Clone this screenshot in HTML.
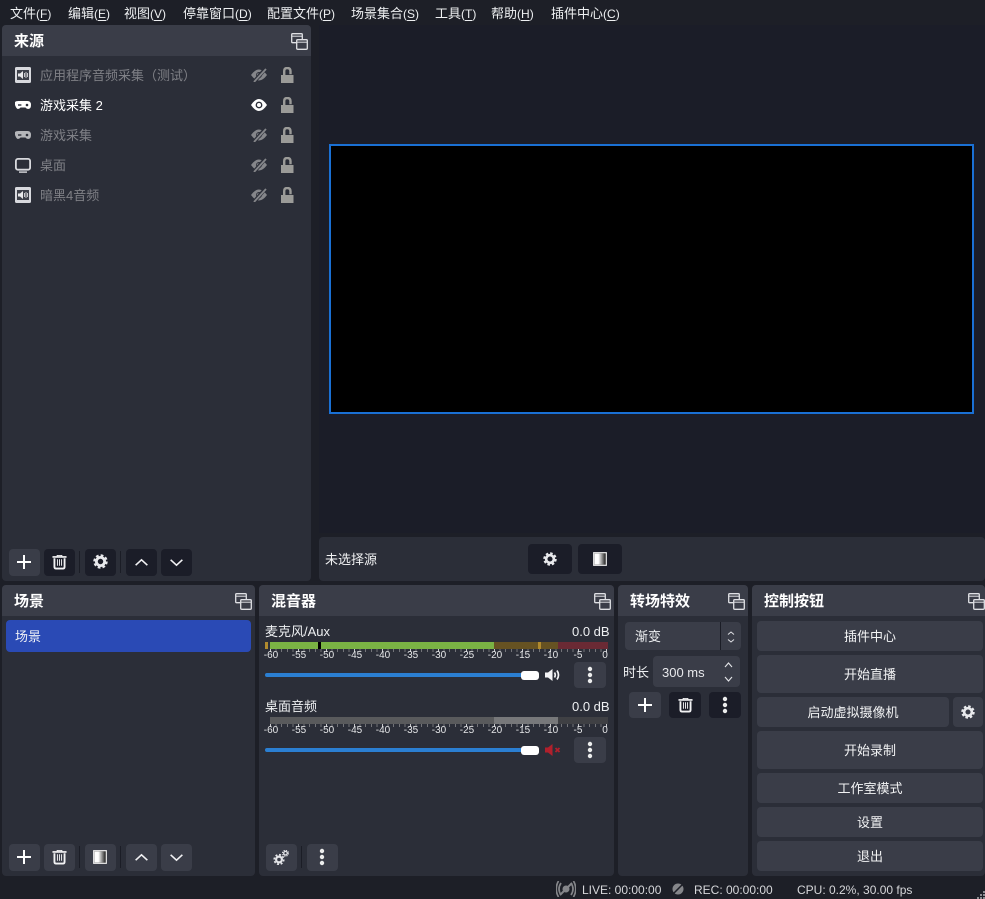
<!DOCTYPE html>
<html lang="zh-CN"><head><meta charset="utf-8"><title>OBS</title>
<style>
html,body{margin:0;padding:0;width:985px;height:899px;overflow:hidden}
body{position:relative;background:#1d1f27;color:#fff;font:13px/22px "Liberation Sans","WenQuanYi Zen Hei","Noto Sans CJK SC",sans-serif}
div,span,svg{position:absolute;box-sizing:border-box}
.t{white-space:nowrap}
u{text-decoration:underline;text-underline-offset:2px}
small{font-size:12px}
.m{top:5px;color:#eef0f2;letter-spacing:0;line-height:18px}
.p{background:#2b2e38;border-radius:4px}
.h{left:0;right:0;top:0;height:31px;background:#3a3d48;border-radius:4px 4px 0 0}
.h b{position:absolute;left:12px;top:6px;font-family:"Liberation Sans","Noto Sans CJK SC",sans-serif;font-size:15px;line-height:22px;font-weight:700;white-space:nowrap}
.b{background:#3a3d48;border-radius:4px;text-align:center}
.d{background:#1b1d28;border-radius:4px}
.l{background:#3a3d48;border-radius:4px}
.c{text-align:center;line-height:22px;color:#f2f3f4}
.dim{color:#7f8086}
.sep{width:1px;background:#1b1d26}
.n{font-size:10px;line-height:12px;color:#e4e5e7;width:24px;text-align:center;white-space:nowrap}
.tick{height:3px;background:repeating-linear-gradient(90deg,#737479 0 1px,transparent 1px 5.6px)}
.tick2{height:3px;background:repeating-linear-gradient(90deg,#c8c9cc 0 1px,transparent 1px 28px)}
</style></head><body>
<svg width="0" height="0" style="left:0;top:0">
<defs>
<linearGradient id="fg"><stop offset="0" stop-color="#fff"/><stop offset=".35" stop-color="#fff"/><stop offset="1" stop-color="#222"/></linearGradient>
<symbol id="dock" viewBox="0 0 17 17"><rect x=".7" y=".7" width="10.6" height="9" rx="1" fill="none" stroke="#dfe0e4" stroke-width="1.3"/><path d="M1 3.2h10" stroke="#dfe0e4"/><rect x="5.7" y="6.7" width="10.6" height="9.6" rx="1" fill="#3a3d48" stroke="#dfe0e4" stroke-width="1.3"/><path d="M6 9.2h10" stroke="#dfe0e4"/></symbol>
<symbol id="plus" viewBox="0 0 16 16"><path d="M8 1v14M1 8h14" stroke="#fff" stroke-width="2"/></symbol>
<symbol id="trash" viewBox="0 0 16 16"><path d="M.5 2.600h15" stroke="#f2f2f4" stroke-width="1.800"/><path d="M5.500 2.500V1h5v1.500" stroke="#f2f2f4" fill="none"/><path d="M2.600 4v9.200q0 1.800 1.800 1.800h7.200q1.800 0 1.800-1.800V4" fill="none" stroke="#f2f2f4" stroke-width="2"/><path d="M5.800 5v7M8 5v7M10.200 5v7" stroke="#f2f2f4"/></symbol>
<symbol id="gear" viewBox="0 0 16 16"><circle cx="8" cy="8" r="4.4" fill="none" stroke="#e8e9ec" stroke-width="3"/><circle cx="8" cy="8" r="6.5" fill="none" stroke="#e8e9ec" stroke-width="2.4" stroke-dasharray="2.9 2.2"/></symbol>
<symbol id="up" viewBox="0 0 16 10"><path d="M1.5 8L8 2l6.500 6" fill="none" stroke="#f2f2f4" stroke-width="1.800"/></symbol>
<symbol id="down" viewBox="0 0 16 10"><path d="M1.500 2L8 8l6.500-6" fill="none" stroke="#f2f2f4" stroke-width="1.800"/></symbol>
<symbol id="filter" viewBox="0 0 14 14"><rect x=".7" y=".7" width="12.600" height="12.600" fill="#222" stroke="#eee" stroke-width="1.200"/><rect x="1.500" y="1.500" width="11" height="11" fill="url(#fg)"/></symbol>
<symbol id="dots" viewBox="0 0 6 18"><circle cx="3" cy="3" r="2.200" fill="#eceded"/><circle cx="3" cy="9" r="2.200" fill="#eceded"/><circle cx="3" cy="15" r="2.200" fill="#eceded"/></symbol>
<symbol id="eye" viewBox="0 0 16 12"><path d="M0 6Q4 0 8 0t8 6q-4 6-8 6T0 6z" fill="#fff"/><circle cx="8" cy="6" r="3.400" fill="#2b2e38"/><circle cx="8" cy="6" r="2" fill="#fff"/></symbol>
<symbol id="eyeoff" viewBox="0 0 16 14"><path d="M0 7Q4 1.500 8 1.500T16 7q-4 5.500-8 5.500T0 7z" fill="#85868a"/><circle cx="8" cy="7" r="3" fill="#2b2e38"/><circle cx="7.500" cy="7" r="1.700" fill="#85868a"/><path d="M2.500 14.500L15 0" stroke="#2b2e38" stroke-width="3.800"/><path d="M3 14L15 1" stroke="#85868a" stroke-width="1.800"/></symbol>
<symbol id="lock" viewBox="0 0 13 16"><rect x="0" y="8" width="12.500" height="8" fill="#9b9b98"/><path d="M3.200 8.500V4.200Q3.200 1 6.300 1t3.200 3.200v3" fill="none" stroke="#9b9b98" stroke-width="2.400"/></symbol>
<symbol id="pad" viewBox="0 0 16 8"><path d="M3.500 0h9Q16 0 16 4t-3 4q-1.500 0-2.500-1.500h-5Q4.500 8 3 8T0 4t3.500-4z" fill="currentColor"/><rect x="3" y="3.300" width="3.400" height="1.400" fill="#2b2e38"/><circle cx="12" cy="4" r="1.300" fill="#2b2e38"/></symbol>
<symbol id="mon" viewBox="0 0 16 15"><rect x=".9" y=".9" width="14.200" height="10.800" rx="2" fill="none" stroke="#d8d9dd" stroke-width="1.800"/><rect x="4" y="13.400" width="8" height="1.400" fill="#d8d9dd"/></symbol>
<symbol id="aud" viewBox="0 0 16 16"><rect width="16" height="16" rx="1.500" fill="#d8d9de"/><rect x="2" y="3" width="12" height="10" fill="#3d4049"/><path d="M3 6.500h2L8 4v8L5 9.500H3z" fill="#e8e8ea"/><path d="M9.500 6v4M11 5v6M12.500 6v4" stroke="#c8c8cc"/></symbol>
<symbol id="spk" viewBox="0 0 16 14"><path d="M0 4.500h3L7.500 1v12L3 9.500H0z" fill="#f4f4f6"/><path d="M9.500 4.500q1.500 2.500 0 5M12 2.500q3 4.500 0 9" fill="none" stroke="#f4f4f6" stroke-width="1.700"/></symbol>
<symbol id="mute" viewBox="0 0 16 14"><path d="M0 4.500h3L7.500 1v12L3 9.500H0z" fill="#b0202c"/><path d="M10.500 5l4 4M14.500 5l-4 4" stroke="#b0202c" stroke-width="1.800"/></symbol>
<symbol id="gears" viewBox="0 0 16 15"><circle cx="6" cy="9.500" r="2.900" fill="none" stroke="#e4e5e8" stroke-width="2.200"/><circle cx="6" cy="9.500" r="4.800" fill="none" stroke="#e4e5e8" stroke-width="1.600" stroke-dasharray="2 1.750"/><circle cx="12.500" cy="3.200" r="1.800" fill="none" stroke="#e4e5e8" stroke-width="1.300"/><circle cx="12.500" cy="3.200" r="3" fill="none" stroke="#e4e5e8" stroke-width="1" stroke-dasharray="1.300 1.050"/></symbol>
<symbol id="live" viewBox="0 0 20 16"><path d="M5 2Q1 8 5 14M2.500 0Q-2 8 2.500 16M15 2q4 6 0 12M17.500 0q4.500 8 0 16" fill="none" stroke="#85868a" stroke-width="1.700"/><circle cx="10" cy="8" r="3.500" fill="#85868a"/><path d="M4 14L16 2" stroke="#85868a" stroke-width="2"/></symbol>
<symbol id="rec" viewBox="0 0 12 12"><circle cx="6" cy="6" r="5.500" fill="#85868a"/><path d="M0 12L12 0" stroke="#1d1f27" stroke-width="1.500"/></symbol>
</defs></svg>

<!-- menu -->
<span class="t m" style="left:10px">文件<small>(<u>F</u>)</small></span>
<span class="t m" style="left:68px">编辑<small>(<u>E</u>)</small></span>
<span class="t m" style="left:124px">视图<small>(<u>V</u>)</small></span>
<span class="t m" style="left:183px">停靠窗口<small>(<u>D</u>)</small></span>
<span class="t m" style="left:267px">配置文件<small>(<u>P</u>)</small></span>
<span class="t m" style="left:351px">场景集合<small>(<u>S</u>)</small></span>
<span class="t m" style="left:435px">工具<small>(<u>T</u>)</small></span>
<span class="t m" style="left:491px">帮助<small>(<u>H</u>)</small></span>
<span class="t m" style="left:551px">插件中心<small>(<u>C</u>)</small></span>

<!-- preview -->
<div style="left:319px;top:25px;width:666px;height:508px;background:#1b1d28"></div>
<div style="left:329px;top:144px;width:645px;height:270px;background:#000;border:2px solid #1a70d4"></div>

<!-- sources -->
<div class="p" style="left:2px;top:25px;width:309px;height:556px">
<div class="h"><b>来源</b></div>
<svg style="left:289px;top:8px" width="17" height="17"><use href="#dock"/></svg>
</div>
<svg style="left:15px;top:67px" width="16" height="16"><use href="#aud"/></svg>
<span class="t dim" style="left:40px;top:65px">应用程序音频采集（测试）</span>
<svg style="left:251px;top:68px" width="16" height="14"><use href="#eyeoff"/></svg>
<svg style="left:281px;top:67px" width="13" height="16"><use href="#lock"/></svg>
<svg style="left:15px;top:101px;color:#fff" width="16" height="8"><use href="#pad"/></svg>
<span class="t" style="left:40px;top:95px">游戏采集 2</span>
<svg style="left:251px;top:99px" width="16" height="12"><use href="#eye"/></svg>
<svg style="left:281px;top:97px" width="13" height="16"><use href="#lock"/></svg>
<svg style="left:15px;top:131px;color:#b5b6ba" width="16" height="8"><use href="#pad"/></svg>
<span class="t dim" style="left:40px;top:125px">游戏采集</span>
<svg style="left:251px;top:128px" width="16" height="14"><use href="#eyeoff"/></svg>
<svg style="left:281px;top:127px" width="13" height="16"><use href="#lock"/></svg>
<svg style="left:15px;top:158px" width="16" height="15"><use href="#mon"/></svg>
<span class="t dim" style="left:40px;top:155px">桌面</span>
<svg style="left:251px;top:158px" width="16" height="14"><use href="#eyeoff"/></svg>
<svg style="left:281px;top:157px" width="13" height="16"><use href="#lock"/></svg>
<svg style="left:15px;top:187px" width="16" height="16"><use href="#aud"/></svg>
<span class="t dim" style="left:40px;top:185px">暗黑4音频</span>
<svg style="left:251px;top:188px" width="16" height="14"><use href="#eyeoff"/></svg>
<svg style="left:281px;top:187px" width="13" height="16"><use href="#lock"/></svg>
<!-- sources toolbar -->
<div class="l" style="left:9px;top:549px;width:31px;height:27px"></div>
<svg style="left:16px;top:554px" width="16" height="16"><use href="#plus"/></svg>
<div class="d" style="left:44px;top:549px;width:31px;height:27px"></div>
<svg style="left:52px;top:554px" width="15" height="16"><use href="#trash"/></svg>
<div class="sep" style="left:79px;top:551px;height:22px"></div>
<div class="d" style="left:85px;top:549px;width:31px;height:27px"></div>
<svg style="left:93px;top:554px" width="15" height="15"><use href="#gear"/></svg>
<div class="sep" style="left:120px;top:551px;height:22px"></div>
<div class="d" style="left:126px;top:549px;width:31px;height:27px"></div>
<svg style="left:134px;top:558px" width="15" height="9"><use href="#up"/></svg>
<div class="d" style="left:161px;top:549px;width:31px;height:27px"></div>
<svg style="left:169px;top:558px" width="15" height="9"><use href="#down"/></svg>

<!-- context bar -->
<div class="p" style="left:319px;top:537px;width:666px;height:44px"></div>
<span class="t" style="left:325px;top:549px;color:#f2f3f4">未选择源</span>
<div class="d" style="left:528px;top:544px;width:44px;height:30px"></div>
<svg style="left:543px;top:552px" width="14" height="14"><use href="#gear"/></svg>
<div class="d" style="left:578px;top:544px;width:44px;height:30px"></div>
<svg style="left:593px;top:552px" width="14" height="14"><use href="#filter"/></svg>

<!-- scenes -->
<div class="p" style="left:2px;top:585px;width:253px;height:291px">
<div class="h"><b>场景</b></div>
<svg style="left:233px;top:8px" width="17" height="17"><use href="#dock"/></svg>
</div>
<div style="left:6px;top:620px;width:245px;height:32px;background:#2a4ab5;border-radius:4px"></div>
<span class="t" style="left:15px;top:626px;color:#eef0f6">场景</span>
<div class="l" style="left:9px;top:844px;width:31px;height:27px"></div>
<svg style="left:16px;top:849px" width="16" height="16"><use href="#plus"/></svg>
<div class="l" style="left:44px;top:844px;width:31px;height:27px"></div>
<svg style="left:52px;top:849px" width="15" height="16"><use href="#trash"/></svg>
<div class="sep" style="left:79px;top:846px;height:22px"></div>
<div class="l" style="left:85px;top:844px;width:31px;height:27px"></div>
<svg style="left:93px;top:850px" width="14" height="14"><use href="#filter"/></svg>
<div class="sep" style="left:120px;top:846px;height:22px"></div>
<div class="l" style="left:126px;top:844px;width:31px;height:27px"></div>
<svg style="left:134px;top:853px" width="15" height="9"><use href="#up"/></svg>
<div class="l" style="left:161px;top:844px;width:31px;height:27px"></div>
<svg style="left:169px;top:853px" width="15" height="9"><use href="#down"/></svg>

<!-- mixer -->
<div class="p" style="left:259px;top:585px;width:355px;height:291px">
<div class="h"><b>混音器</b></div>
<svg style="left:335px;top:8px" width="17" height="17"><use href="#dock"/></svg>
</div>
<span class="t" style="left:265px;top:621px;color:#eef0f2">麦克风/Aux</span>
<span class="t" style="left:572px;top:621px;color:#eef0f2">0.0 dB</span>
<div style="left:265px;top:642px;width:3px;height:7px;background:#b08a2e"></div>
<div style="left:270px;top:642px;width:224px;height:7px;background:#7ab344"></div>
<div style="left:494px;top:642px;width:64px;height:7px;background:#665222"></div>
<div style="left:558px;top:642px;width:50px;height:7px;background:#6a2a34"></div>
<div style="left:318px;top:642px;width:3px;height:7px;background:#000"></div>
<div style="left:538px;top:642px;width:3px;height:7px;background:#b08a2e"></div>
<div class="tick" style="left:270px;top:649px;width:338px"></div>
<div class="tick2" style="left:270px;top:649px;width:338px"></div>
<span class="n" style="left:259px;top:650px">-60</span><span class="n" style="left:287px;top:650px">-55</span><span class="n" style="left:315px;top:650px">-50</span><span class="n" style="left:343px;top:650px">-45</span><span class="n" style="left:371px;top:650px">-40</span><span class="n" style="left:399px;top:650px">-35</span><span class="n" style="left:427px;top:650px">-30</span><span class="n" style="left:455px;top:650px">-25</span><span class="n" style="left:483px;top:650px">-20</span><span class="n" style="left:511px;top:650px">-15</span><span class="n" style="left:539px;top:650px">-10</span><span class="n" style="left:566px;top:650px">-5</span><span class="n" style="left:593px;top:650px">0</span>
<div style="left:265px;top:673px;width:258px;height:4px;background:#2b7fd2;border-radius:2px"></div>
<div style="left:521px;top:671px;width:18px;height:9px;background:#fff;border-radius:3px"></div>
<svg style="left:545px;top:668px" width="16" height="14"><use href="#spk"/></svg>
<div class="l" style="left:574px;top:662px;width:32px;height:26px"></div>
<svg style="left:587px;top:666px" width="6" height="18"><use href="#dots"/></svg>

<span class="t" style="left:265px;top:696px;color:#eef0f2">桌面音频</span>
<span class="t" style="left:572px;top:696px;color:#eef0f2">0.0 dB</span>
<div style="left:270px;top:717px;width:224px;height:7px;background:#595a5c"></div>
<div style="left:494px;top:717px;width:64px;height:7px;background:#77787a"></div>
<div style="left:558px;top:717px;width:50px;height:7px;background:#3f4044"></div>
<div class="tick" style="left:270px;top:724px;width:338px"></div>
<div class="tick2" style="left:270px;top:724px;width:338px"></div>
<span class="n" style="left:259px;top:725px">-60</span><span class="n" style="left:287px;top:725px">-55</span><span class="n" style="left:315px;top:725px">-50</span><span class="n" style="left:343px;top:725px">-45</span><span class="n" style="left:371px;top:725px">-40</span><span class="n" style="left:399px;top:725px">-35</span><span class="n" style="left:427px;top:725px">-30</span><span class="n" style="left:455px;top:725px">-25</span><span class="n" style="left:483px;top:725px">-20</span><span class="n" style="left:511px;top:725px">-15</span><span class="n" style="left:539px;top:725px">-10</span><span class="n" style="left:566px;top:725px">-5</span><span class="n" style="left:593px;top:725px">0</span>
<div style="left:265px;top:748px;width:258px;height:4px;background:#2b7fd2;border-radius:2px"></div>
<div style="left:521px;top:746px;width:18px;height:9px;background:#fff;border-radius:3px"></div>
<svg style="left:545px;top:743px" width="16" height="14"><use href="#mute"/></svg>
<div class="l" style="left:574px;top:737px;width:32px;height:26px"></div>
<svg style="left:587px;top:741px" width="6" height="18"><use href="#dots"/></svg>

<div class="l" style="left:266px;top:844px;width:31px;height:27px"></div>
<svg style="left:273px;top:850px" width="16" height="15"><use href="#gears"/></svg>
<div class="sep" style="left:301px;top:846px;height:22px"></div>
<div class="l" style="left:307px;top:844px;width:31px;height:27px"></div>
<svg style="left:319px;top:848px" width="6" height="18"><use href="#dots"/></svg>

<!-- transitions -->
<div class="p" style="left:618px;top:585px;width:130px;height:291px">
<div class="h"><b>转场特效</b></div>
<svg style="left:110px;top:8px" width="17" height="17"><use href="#dock"/></svg>
</div>
<div class="l" style="left:625px;top:622px;width:116px;height:28px"></div>
<div style="left:720px;top:622px;width:1px;height:28px;background:#1b1d26"></div>
<span class="t" style="left:635px;top:626px;color:#eef0f2">渐变</span>
<svg style="left:727px;top:631px" width="8" height="4"><path d="M1 3.500L4 1l3 2.500" fill="none" stroke="#dfe0e4"/></svg>
<svg style="left:727px;top:639px" width="8" height="4"><path d="M1 .5L4 3l3-2.500" fill="none" stroke="#dfe0e4"/></svg>
<span class="t" style="left:623px;top:662px;color:#eef0f2">时长</span>
<div class="l" style="left:653px;top:656px;width:87px;height:31px"></div>
<span class="t" style="left:662px;top:662px;color:#e8e9ec">300 ms</span>
<svg style="left:724px;top:662px" width="9" height="6"><path d="M1 5l3.500-4L8 5" fill="none" stroke="#e4e5e8" stroke-width="1.100"/></svg>
<svg style="left:724px;top:676px" width="9" height="6"><path d="M1 1l3.500 4L8 1" fill="none" stroke="#e4e5e8" stroke-width="1.100"/></svg>
<div class="l" style="left:629px;top:692px;width:32px;height:26px"></div>
<svg style="left:637px;top:697px" width="16" height="16"><use href="#plus"/></svg>
<div class="d" style="left:669px;top:692px;width:32px;height:26px"></div>
<svg style="left:678px;top:697px" width="15" height="16"><use href="#trash"/></svg>
<div class="d" style="left:709px;top:692px;width:32px;height:26px"></div>
<svg style="left:722px;top:696px" width="6" height="18"><use href="#dots"/></svg>

<!-- controls -->
<div class="p" style="left:752px;top:585px;width:233px;height:291px">
<div class="h"><b>控制按钮</b></div>
<svg style="left:216px;top:8px" width="17" height="17"><use href="#dock"/></svg>
</div>
<div class="b c" style="left:757px;top:621px;width:226px;height:30px;padding-top:5px">插件中心</div>
<div class="b c" style="left:757px;top:655px;width:226px;height:38px;padding-top:9px">开始直播</div>
<div class="b c" style="left:757px;top:697px;width:192px;height:30px;padding-top:5px">启动虚拟摄像机</div>
<div class="b" style="left:953px;top:697px;width:30px;height:30px"></div>
<svg style="left:961px;top:705px" width="14" height="14"><use href="#gear"/></svg>
<div class="b c" style="left:757px;top:731px;width:226px;height:38px;padding-top:9px">开始录制</div>
<div class="b c" style="left:757px;top:773px;width:226px;height:30px;padding-top:5px">工作室模式</div>
<div class="b c" style="left:757px;top:807px;width:226px;height:30px;padding-top:5px">设置</div>
<div class="b c" style="left:757px;top:841px;width:226px;height:30px;padding-top:5px">退出</div>

<!-- status -->
<svg style="left:556px;top:881px" width="20" height="16"><use href="#live"/></svg>
<span class="t" style="left:582px;top:879px;font-size:12px;color:#d6d7da">LIVE: 00:00:00</span>
<svg style="left:672px;top:883px" width="12" height="12"><use href="#rec"/></svg>
<span class="t" style="left:694px;top:879px;font-size:12px;color:#d6d7da">REC: 00:00:00</span>
<span class="t" style="left:797px;top:879px;font-size:12px;color:#d6d7da">CPU: 0.2%, 30.00 fps</span>
<svg style="left:976px;top:890px" width="9" height="9"><path d="M7 1h2v2H7zM4 4h2v2H4zM7 4h2v2H7zM1 7h2v2H1zM4 7h2v2H4zM7 7h2v2H7z" fill="#8a8b90"/></svg>
</body></html>
